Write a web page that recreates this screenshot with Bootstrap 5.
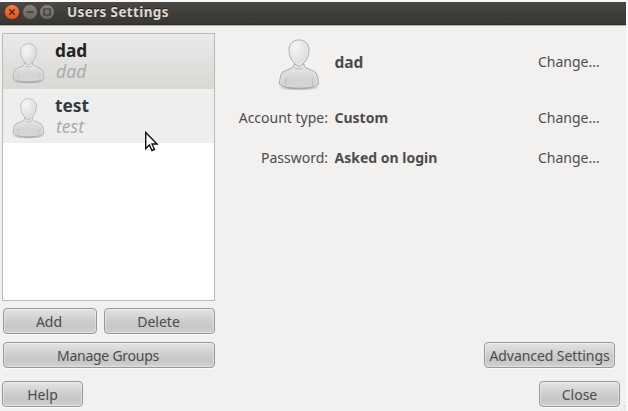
<!DOCTYPE html>
<html lang="en">
<head>
<meta charset="utf-8">
<meta name="viewport" content="width=device-width, initial-scale=1">
<title>Users Settings</title>
<link href="https://cdn.jsdelivr.net/npm/bootstrap@5.3.0/dist/css/bootstrap.min.css" rel="stylesheet">
<style>
body{width:628px;height:411px;overflow:hidden;background:#f9f9fb;font-family:"Noto Sans","Open Sans",sans-serif;font-size:14px;line-height:20px;color:#4c4c4c;padding-top:2px}
.win{width:626px;height:409px;background:#f2f1f0}
.titlebar{height:24px;background:linear-gradient(#4b4a45,#3d3c38 50%,#3a3935 90%,#2b2a27);border-bottom:1px solid #b5b3af;padding:0 0 4px 4px;color:#dfdbd2;font-weight:700;font-size:13.5px;letter-spacing:.37px}
.titlebar svg{margin-right:1.5px}
.titlebar span{margin-left:10.500px;text-shadow:0 -1px #22211f}
.side{width:213px;margin-left:2px;padding-top:7px}
.users{height:268px;border:1px solid #bcbab6;background:#fff}
.users .list-group-item{height:54px;border:0;padding:0 0 0 9px;background:#eee;color:#33393c}
.users .list-group-item.active{height:55px;margin:0;background:linear-gradient(#ebeae8,#dad8d5);color:#222}
.users svg{margin-top:9px}
.uname{font-size:17.3px;line-height:20px;font-weight:700;padding-top:5px}
.ulogin{font-size:17.6px;line-height:20px;font-style:italic;color:#ababab;padding-left:1px}
.names{margin-left:10px;margin-top:2px}
.gbtn{height:26px;padding:0;border:1px solid #999896;border-radius:4px;background:linear-gradient(#e4e4e4,#cbcbcb 55%,#c7c7c7 75%,#d2d2d2);box-shadow:inset 0 0 0 1px rgba(255,255,255,.35),0 1px #fbfbfa;color:#4c4c4c;font-size:14px;line-height:23px;white-space:nowrap}
.rows{gap:7px}
.w-add{width:94px}.w-del{width:111px}.w-man{width:212px;letter-spacing:-.25px}.w-help{width:81px}.w-adv{width:131px;letter-spacing:-.07px}.w-close{width:81px}
.w-add,.w-del,.w-man{padding-right:2px}
.details{display:grid;grid-template-columns:105px 198px 1fr;column-gap:6px;grid-template-rows:72px 40px 40px;align-items:center;margin-left:8px}
.details>:nth-child(3n+1){text-align:right}
.details strong{padding-left:.5px}
.bigname{font-size:15.5px}
.portrait{padding-top:5px}
.actions{padding:8px 11px 0 3px}
.foot{height:39px;padding:0 6px 0 2px;margin-top:13px}
.pointer{position:absolute;left:144px;top:131px}
.grip{position:absolute;left:616px;top:401px}
</style>
</head>
<body>
<svg width="0" height="0" class="position-absolute">
<defs>
<radialGradient id="hd" cx=".35" cy=".3" r=".8"><stop offset="0" stop-color="#f6f6f6"/><stop offset="1" stop-color="#d6d6d6"/></radialGradient>
<linearGradient id="bd" x2="0" y2="1"><stop offset="0" stop-color="#ececec"/><stop offset=".6" stop-color="#d4d4d4"/><stop offset="1" stop-color="#d6d6d6"/></linearGradient>
<radialGradient id="sh"><stop offset=".5" stop-color="#777" stop-opacity=".55"/><stop offset="1" stop-color="#777" stop-opacity="0"/></radialGradient>
<linearGradient id="cl" x2="0" y2="1"><stop offset="0" stop-color="#f5804f"/><stop offset="1" stop-color="#e5500f"/></linearGradient>
<linearGradient id="gr" x2="0" y2="1"><stop offset="0" stop-color="#858379"/><stop offset="1" stop-color="#66645d"/></linearGradient>
<symbol id="person" viewBox="0 0 42 52">
<ellipse cx="21" cy="48.5" rx="20.5" ry="3.200" fill="url(#sh)"/>
<path d="M16 25v2C14.500 29.500 8 31 4.800 33 2.200 35.500 1.800 41 1.500 45c1 2.500 9 4.200 19.500 4.200S39.500 47.500 40.500 45c-.3-4-.7-9.500-3.300-12C34 31 27.500 29.500 26 27v-2z" fill="url(#bd)" stroke="#a8a8a8"/>
<path d="M17 28.500c1 2 7 2 8 0" fill="none" stroke="#c4c4c4" stroke-width="1.500"/>
<path d="M5.500 34.500C3.500 37 3 41 2.800 44.500M36.500 34.500c2 2.500 2.500 6 2.700 10" fill="none" stroke="#fff" stroke-opacity=".5" stroke-width=".8"/>
<path d="M7.500 46.500q-.5-4 .7-7M34.500 46.500q.5-4-.7-7" fill="none" stroke="#b8b8b8" stroke-width=".8"/>
<path d="M21 1c6.700 0 10 4.300 10 10.200 0 6.500-4 12.300-7.300 15-2 1.400-3.400 1.400-5.400 0C15 23.500 11 17.700 11 11.200 11 5.300 14.300 1 21 1z" fill="url(#hd)" stroke="#adadad"/>
<path d="M21 2.200c6 0 8.800 3.800 8.800 9 0 5.800-3.500 11.300-6.600 13.700-1.700 1.100-2.700 1.100-4.400 0-3.100-2.400-6.600-7.900-6.600-13.700 0-5.200 2.800-9 8.800-9z" fill="none" stroke="#fff" stroke-opacity=".45" stroke-width=".8"/>
</symbol>
</defs>
</svg>
<main class="win d-flex flex-column">
<header class="titlebar d-flex align-items-center flex-shrink-0">
<svg width="16" height="16"><circle cx="8" cy="8" r="7.500" fill="url(#cl)" stroke="#2c2b28" stroke-width=".5"/><path d="M5.300 5.300l5.400 5.400m0-5.400l-5.400 5.400" stroke="#43291c" stroke-width="1.300"/></svg>
<svg width="16" height="16"><circle cx="8" cy="8" r="7.500" fill="url(#gr)" stroke="#2c2b28" stroke-width=".5"/><path d="M4.500 8h7" stroke="#34332f" stroke-width="1.300"/></svg>
<svg width="16" height="16"><circle cx="8" cy="8" r="7.500" fill="url(#gr)" stroke="#2c2b28" stroke-width=".5"/><path d="M5 5h6v6H5z" fill="none" stroke="#34332f" stroke-width="1.200"/></svg>
<span>Users Settings</span>
</header>
<div class="d-flex">
<section class="side d-flex flex-column rows">
<div class="users list-group rounded-0">
<div class="list-group-item active d-flex align-items-start"><svg width="33" height="41"><use href="#person"/></svg><div class="names"><div class="uname">dad</div><div class="ulogin">dad</div></div></div>
<div class="list-group-item d-flex align-items-start"><svg width="33" height="41"><use href="#person"/></svg><div class="names"><div class="uname">test</div><div class="ulogin">test</div></div></div>
</div>
<div class="d-flex rows justify-content-end"><button class="btn gbtn w-add">Add</button><button class="btn gbtn w-del">Delete</button></div>
</section>
<section class="flex-grow-1">
<div class="details">
<div class="portrait"><svg width="42" height="52" class="me-2"><use href="#person"/></svg></div><strong class="bigname">dad</strong><span>Change…</span>
<span>Account type:</span><strong>Custom</strong><span>Change…</span>
<span>Password:</span><strong>Asked on login</strong><span>Change…</span>
</div>
</section>
</div>
<div class="actions d-flex justify-content-between"><button class="btn gbtn w-man">Manage Groups</button><button class="btn gbtn w-adv">Advanced Settings</button></div>
<footer class="foot d-flex justify-content-between"><button class="btn gbtn w-help">Help</button><button class="btn gbtn w-close">Close</button></footer>
</main>
<svg class="pointer" width="15" height="22" viewBox="0 0 15 22"><path d="M1.700 1.500v16l3.700-3.500 2.500 5.500 2.600-1.200L8 13h5z" fill="#fff" stroke="#111" stroke-width="1.400"/></svg>
<svg class="grip" width="10" height="10" fill="#c9c7c3"><path d="M8 5h1v1H8zM5 8h1v1H5zM8 8h1v1H8z"/></svg>
</body>
</html>
